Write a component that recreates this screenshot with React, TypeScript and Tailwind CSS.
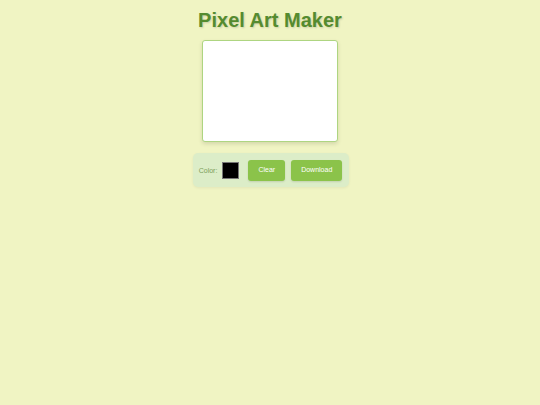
import React from "react";

export default function App() {
  return (
    <div className="min-h-[405px] w-full bg-[#f0f4c3] flex flex-col items-center pt-[9px] font-['Liberation_Sans',Arial,sans-serif]">
      <h1 className="text-[20px] leading-[23px] font-bold text-[#558b2f] [text-shadow:1px_1px_2px_rgba(0,0,0,0.15)]">
        Pixel Art Maker
      </h1>
      <div className="mt-[8px] w-[136px] h-[102px] bg-white border-[1.5px] border-[#aed581] rounded-[3px] shadow-[0_2px_4px_rgba(0,0,0,0.12)]" />
      <div className="mt-[11px] ml-[2px] flex items-center bg-[#dcedc8] rounded-[5px] pl-[6px] pr-[7px] pt-[7px] pb-[6px] shadow-[0_1px_3px_rgba(0,0,0,0.06)]">
        <span className="text-[7px] leading-[9px] text-[#7a9d5a]">Color:</span>
        <div className="ml-[5px] w-[17px] h-[17px] bg-black border border-[#777]" />
        <button className="ml-[9px] h-[21px] px-[10px] bg-[#8bc34a] text-white text-[7px] rounded-[3px] shadow-[0_1px_2px_rgba(0,0,0,0.12)]">
          Clear
        </button>
        <button className="ml-[6px] h-[21px] px-[10px] bg-[#8bc34a] text-white text-[7px] rounded-[3px] shadow-[0_1px_2px_rgba(0,0,0,0.12)]">
          Download
        </button>
      </div>
    </div>
  );
}
